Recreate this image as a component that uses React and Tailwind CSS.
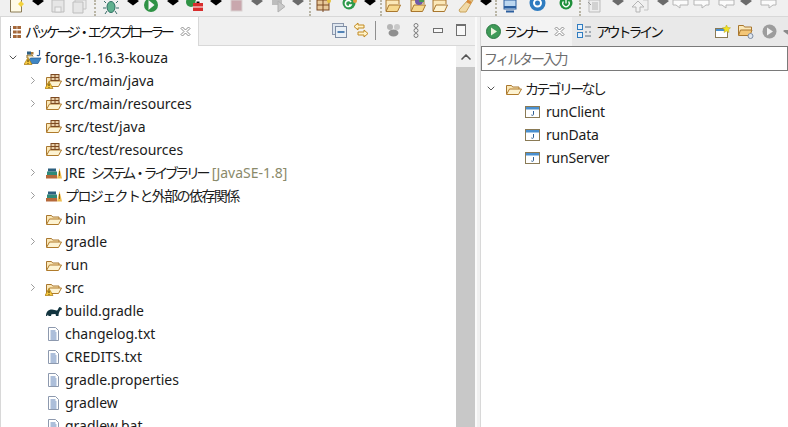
import { ChevronDown, ChevronRight, ChevronUp } from "lucide-react"

const uiFont = { fontFamily: '"Noto Sans", "Noto Sans CJK JP", sans-serif' }

// ---- toolbar bits ----
function Drop({ color = "#000", className = "" }) {
  return (
    <svg width="12" height="16" viewBox="0 0 12 16" className={"shrink-0 " + className}>
      <polygon points="0,1 3,-1 9,-1 12,1 6,5.5" fill={color} />
    </svg>
  )
}

function Dots({ className = "" }) {
  return <div className={"h-[16px] w-[2px] shrink-0 border-l-2 border-dotted border-[#b9b5a5] " + className} />
}

function Tool({ w = 16, className = "", children }) {
  return (
    <svg width={w} height="16" viewBox={`0 0 ${w} 16`} className={"shrink-0 " + className}>
      {children}
    </svg>
  )
}

// ---- tree icons ----
function FolderIcon({ pkg, warn }) {
  return (
    <svg width="18" height="16" viewBox="0 0 18 16">
      <path d="M1.500 13V4.500h5l1.200 1.500H14v2" fill="#fbe8b8" stroke="#a9772f" />
      <path d="M1.500 13.500 4.500 8h12l-3 5.500z" fill="#fdf3d2" stroke="#b07b2b" />
      {pkg && (
        <g>
          <rect x="6" y="1.500" width="8" height="6" fill="#e9cfa8" stroke="#7d4a22" />
          <path d="M10 1.500v6M6 4.500h8" stroke="#7d4a22" />
        </g>
      )}
      {warn && <Warn />}
    </svg>
  )
}

function Warn() {
  return (
    <g>
      <polygon points="4,8.500 8,15.500 0,15.500" fill="#f7c93e" stroke="#a87a12" strokeWidth="0.700" />
      <path d="M4 10.500v2.600M4 14v.8" stroke="#3a2a05" strokeWidth="1" />
    </g>
  )
}

function LibraryIcon() {
  return (
    <svg width="18" height="16" viewBox="0 0 18 16">
      <rect x="1" y="10" width="11" height="3.500" fill="#b5683a" />
      <rect x="2" y="6.500" width="10" height="3.500" fill="#2f8a78" />
      <rect x="3" y="3.500" width="8" height="3" fill="#2c5f7f" />
      <path d="M14.500 3l2.500 10.500h-5z" fill="#eebc4c" />
      <path d="M14.500 6v5" stroke="#8a6516" />
    </svg>
  )
}

function GradleIcon() {
  return (
    <svg width="18" height="16" viewBox="0 0 18 16">
      <path d="M1 13c0-4 2-6.500 6-6.500 2 0 3 1 5 1 1 0 1-2.500 2.500-3.500 1.200 0 2.500 1 2.500 2 0 1-1.500.6-2 1.500-.8 2-1.500 3-1.500 5.500h-2.500l-.5-2-4 .2-.5 1.800H3.500l-.5-1.500L2 13z" fill="#12343f" />
    </svg>
  )
}

function DocIcon() {
  return (
    <svg width="18" height="16" viewBox="0 0 18 16">
      <path d="M3.500 1.500h7l3 3v10h-10z" fill="#fff" stroke="#8d99ae" />
      <path d="M5.500 5h5M5.500 7h6M5.500 9h6M5.500 11h6M5.500 13h6" stroke="#5b7fb5" />
    </svg>
  )
}

function RootIcon() {
  return (
    <svg width="18" height="17" viewBox="0 0 18 17">
      <path d="M3 9V6h5l1 1.500" fill="#e8d9a8" stroke="#8a6a2a" />
      <path d="M4 12 6.500 9H17l-3 5.500H5z" fill="#3f86c4" stroke="#23588c" strokeWidth="0.700" />
      <rect x="3" y="2.500" width="4" height="3" fill="#2f5f82" />
      <rect x="7" y="3" width="2.500" height="2.500" fill="#a87a3a" />
      <path d="M15.500 1v4.500c0 1.500-2 1.500-2.500.5" fill="none" stroke="#2c5f9e" strokeWidth="1.200" />
      <Warn />
    </svg>
  )
}

function RunConfigIcon() {
  return (
    <svg width="15" height="14" viewBox="0 0 15 14">
      <rect x="0.500" y="1.500" width="14" height="11" fill="#fff" stroke="#8a7a55" />
      <rect x="1" y="2" width="13" height="2.500" fill="#4a90d0" />
      <path d="M8.500 6v3.500c0 1-1.500 1-2.200.4" fill="none" stroke="#2f5f95" />
    </svg>
  )
}

function CloseX() {
  return (
    <svg width="11" height="11" viewBox="0 0 11 11" className="block">
      <path d="M1 2.500 2.500 1 5.500 4 8.500 1 10 2.500 7 5.500 10 8.500 8.500 10 5.500 7 2.500 10 1 8.500 4 5.500z" fill="#fff" stroke="#8c8c8c" />
    </svg>
  )
}

function Row({ root, expand, icon, tracking, children }) {
  return (
    <div className={"flex h-[23px] shrink-0 items-center whitespace-nowrap " + (root ? "pl-[6px]" : "pl-[26px]")}>
      <span className="flex w-[12px] justify-center">
        {expand === "open" && <ChevronDown size={13} strokeWidth={2} color="#555" />}
        {expand === "closed" && <ChevronRight size={13} strokeWidth={2} color="#9a9a9a" />}
      </span>
      <span className={root ? "ml-[5px] w-[21px]" : "ml-[6px] w-[20px]"}>{icon}</span>
      <span className={"text-[14px] text-[#1b1b1b] " + (tracking || "")}>{children}</span>
    </div>
  )
}

export default function App() {
  return (
    <div className="flex h-[427px] w-[788px] flex-col overflow-hidden bg-[#f0f0f0]" style={uiFont}>
      {/* top toolbar, cut off at the top of the capture */}
      <div className="flex h-[16px] shrink-0 items-start overflow-hidden">
        <Tool w={16} className="ml-[9px]">
          <path d="M1.500-3h11v15h-11z" fill="#fffbe6" stroke="#8a7a55" />
          <path d="M9 4l3-3 3 3-3 3z" fill="#f3d23c" />
        </Tool>
        <Drop className="ml-[7px]" />
        <Tool w={14} className="ml-[7px]">
          <path d="M1 0h12v12H1z" fill="#e6e6e6" stroke="#bdbdbd" />
          <rect x="4" y="7" width="6" height="5" fill="#f2f2f2" stroke="#c4c4c4" />
        </Tool>
        <Tool w={16} className="ml-[7px]">
          <path d="M3 0h11v9H3z" fill="#ececec" stroke="#c4c4c4" />
          <path d="M1 2h10v11H1z" fill="#e6e6e6" stroke="#bdbdbd" />
        </Tool>
        <Dots className="ml-[6px]" />
        <Tool w={16} className="ml-[7px]">
          <ellipse cx="8" cy="7" rx="4" ry="5.500" fill="#5fb08e" stroke="#2e6f63" />
          <path d="M3 3 1 1M13 3l2-2M3 8H0M13 8h3M4 11l-2 3M12 11l2 3" stroke="#3b6d6a" />
        </Tool>
        <Drop className="ml-[8px]" />
        <Tool w={16} className="ml-[5px]">
          <circle cx="7" cy="5" r="7" fill="#2f9245" />
          <path d="M4.500 0v10L10.500 5z" fill="#f5f5f5" />
        </Tool>
        <Drop className="ml-[7px]" />
        <Tool w={18} className="ml-[7px]">
          <circle cx="5" cy="2" r="5" fill="#2f9245" />
          <rect x="7" y="3" width="10" height="8" fill="#d82c2c" />
          <path d="M7 7h10M10 3V1h4v2" stroke="#fff" />
        </Tool>
        <Drop className="ml-[6px]" />
        <Tool w={14} className="ml-[8px]">
          <rect x="1" y="0" width="11" height="11" fill="#c9a7ad" stroke="#d9d2d2" />
        </Tool>
        <Drop color="#6b6b6b" className="ml-[7px]" />
        <Tool w={18} className="ml-[9px]">
          <path d="M0 0h10v5H0z" fill="#bdbdbd" />
          <path d="M6 1v11l7-5.500z" fill="#c9c9c9" stroke="#b0b0b0" />
        </Tool>
        <Drop color="#6b6b6b" className="ml-[2px]" />
        <Dots className="ml-[5px]" />
        <Tool w={16} className="ml-[5px]">
          <rect x="1" y="0" width="12" height="10" fill="#e8c89a" stroke="#7d4a22" />
          <path d="M7 0v12M1 5h12" stroke="#7d4a22" />
          <circle cx="13" cy="1" r="2" fill="#e6c341" />
        </Tool>
        <Tool w={16} className="ml-[10px]">
          <circle cx="7" cy="3" r="6.500" fill="#2e9a4b" />
          <path d="M9 2a3 3 0 1 0 0 3H7" fill="none" stroke="#fff" strokeWidth="1.600" />
          <circle cx="13" cy="1" r="2" fill="#e09a3a" />
        </Tool>
        <Drop className="ml-[6px]" />
        <Dots className="ml-[4px]" />
        <Tool w={16} className="ml-[3px]">
          <path d="M1 11V0h13v4" fill="#fbe8b8" stroke="#a9772f" />
          <path d="M1 11.500 4 5h11.500l-3 6.500z" fill="#f7d98e" stroke="#a9772f" />
        </Tool>
        <Tool w={17} className="ml-[9px]">
          <path d="M1 11V0h13v4" fill="#fbe8b8" stroke="#a9772f" />
          <path d="M1 11.500 4 5h11.500l-3 6.500z" fill="#f7d98e" stroke="#a9772f" />
          <circle cx="9" cy="1" r="4" fill="#6f5ba8" />
          <path d="M9 1h5" stroke="#4a9a55" strokeWidth="2" />
        </Tool>
        <Tool w={16} className="ml-[5px]">
          <path d="M1 11V0h13v4" fill="#fbe8b8" stroke="#a9772f" />
          <path d="M1 11.500 4 5h11.500l-3 6.500z" fill="#fdf3d2" stroke="#a9772f" />
        </Tool>
        <Tool w={18} className="ml-[8px]">
          <path d="M3 10 12 0h5l-7 12H4z" fill="#f0d9a6" stroke="#c9a25a" />
          <path d="M11 1l4 2" stroke="#d98a3a" strokeWidth="3" />
        </Tool>
        <Drop className="ml-[6px]" />
        <Dots className="ml-[3px]" />
        <Tool w={14} className="ml-[6px]">
          <rect x="1" y="0" width="12" height="9" fill="#bcd7f0" stroke="#2c5f9e" />
          <path d="M1 7h12" stroke="#2c5f9e" strokeWidth="2" />
          <path d="M3 11.500h8" stroke="#2c5f9e" strokeWidth="2" />
        </Tool>
        <Tool w={18} className="ml-[12px]">
          <circle cx="8.500" cy="3" r="8" fill="#2f7cc0" />
          <circle cx="8.500" cy="3" r="3.500" fill="none" stroke="#fff" strokeWidth="2" />
        </Tool>
        <Tool w={15} className="ml-[12px]">
          <circle cx="7" cy="3" r="6.500" fill="#1f8f3a" />
          <path d="M7 -0.500v4M4.500 1.500a3.200 3.200 0 1 0 5 0" fill="none" stroke="#fff" strokeWidth="1.300" />
        </Tool>
        <Dots className="ml-[5px]" />
        <Tool w={17} className="ml-[6px]">
          <path d="M2 0h11v12H2z" fill="#ededed" stroke="#bbb" />
          <path d="M5 3h6M5 5h6M5 7h6M5 9h6" stroke="#b5b5b5" />
          <path d="M1 2l3 3" stroke="#999" />
        </Tool>
        <Drop color="#6b6b6b" className="ml-[8px]" />
        <Tool w={19} className="ml-[6px]">
          <path d="M6 12V7H2l6-6 6 6h-4v5z" fill="#f2f2f2" stroke="#b5b5b5" />
          <path d="M13 0h5v10h-4" fill="none" stroke="#c4c4c4" />
        </Tool>
        <Drop color="#6b6b6b" className="ml-[8px]" />
        <Tool w={17} className="ml-[3px]">
          <path d="M1 0h15v5H8v3L4 5H1z" fill="#fbfbfb" stroke="#b5b5b5" />
        </Tool>
        <Tool w={17} className="ml-[4px]">
          <path d="M1 0h15v5h-3L9 8V5H1z" fill="#fbfbfb" stroke="#b5b5b5" />
        </Tool>
        <Tool w={17} className="ml-[8px]">
          <path d="M1 0h15v5H8v3L4 5H1z" fill="#fbfbfb" stroke="#b5b5b5" />
        </Tool>
        <Drop color="#6b6b6b" className="ml-[5px]" />
        <Tool w={17} className="ml-[8px]">
          <path d="M1 0h15v5h-3L9 8V5H1z" fill="#fbfbfb" stroke="#b5b5b5" />
        </Tool>
      </div>

      <div className="flex min-h-0 flex-1 border-t border-[#d8d8d8]">
        {/* package explorer */}
        <div className="flex w-[475px] shrink-0 flex-col border-l border-[#d8d8d8] bg-white">
          <div className="flex h-[29px] shrink-0 items-center">
            <div className="flex h-[29px] w-[198px] shrink-0 items-center border-r border-[#d8d8d8] bg-white pl-[8px]">
              <svg width="13" height="14" viewBox="0 0 13 14" className="shrink-0">
                <path d="M1.500 1v12" stroke="#555" />
                <rect x="4" y="1" width="8" height="3" fill="#a5683a" />
                <rect x="4" y="5.500" width="8" height="3" fill="#a5683a" />
                <rect x="4" y="10" width="8" height="3" fill="#a5683a" />
                <path d="M1.500 2.500H4M1.500 7H4M1.500 11.500H4M8 1v12" stroke="#fff" strokeWidth="0.600" />
              </svg>
              <span className="ml-[3px] w-[150px] shrink-0 whitespace-nowrap text-[14px] tracking-[-3.5px] text-[#111]">パッケージ・エクスプローラー</span>
              <span className="ml-auto mr-[7px]"><CloseX /></span>
            </div>
            <div className="flex h-[29px] flex-1 items-center border-b border-[#d8d8d8] bg-[#f0f0f0] pb-[2px]">
              <svg width="15" height="15" viewBox="0 0 15 15" className="ml-[133px]">
                <rect x="0.500" y="0.500" width="11" height="11" fill="#dfe6ee" stroke="#8d99ae" />
                <rect x="3.500" y="3.500" width="11" height="11" fill="#e9eff5" stroke="#7d8ca3" />
                <path d="M5.500 9h7" stroke="#1f5fa0" strokeWidth="1.500" />
              </svg>
              <svg width="16" height="16" viewBox="0 0 16 16" className="ml-[6px]">
                <path d="M1 4.500 5 1v2h6v3H5v2z" fill="#fff3c9" stroke="#c28a22" />
                <path d="M15 11.500 11 8v2H5v3h6v2z" fill="#fff3c9" stroke="#c28a22" />
              </svg>
              <div className="ml-[6px] h-[19px] w-px bg-[#8f8f8f]" />
              <svg width="15" height="14" viewBox="0 0 15 14" className="ml-[10px]">
                <circle cx="4" cy="4" r="3" fill="#b5b5b5" />
                <circle cx="11" cy="4" r="3" fill="#c9c9c9" />
                <ellipse cx="7.500" cy="10" rx="5" ry="3.500" fill="#8f8f8f" />
              </svg>
              <svg width="6" height="15" viewBox="0 0 6 15" className="ml-[12px]">
                <circle cx="3" cy="2.500" r="2" fill="#f5f5f5" stroke="#7b7b7b" />
                <circle cx="3" cy="7.500" r="2" fill="#f5f5f5" stroke="#7b7b7b" />
                <circle cx="3" cy="12.500" r="2" fill="#f5f5f5" stroke="#7b7b7b" />
              </svg>
              <div className="ml-[14px] h-[5px] w-[10px] border border-[#6f6f6f] bg-[#f8f8f8]" />
              <div className="ml-[13px] h-[12px] w-[10px] border border-t-2 border-[#6f6f6f] bg-[#f8f8f8]" />
            </div>
          </div>
          <div className="flex min-h-0 flex-1">
            <div className="min-w-0 flex-1 overflow-hidden">
              <Row root expand="open" icon={<RootIcon />}>forge-1.16.3-kouza</Row>
              <Row expand="closed" icon={<FolderIcon pkg warn />}>src/main/java</Row>
              <Row expand="closed" icon={<FolderIcon pkg />}>src/main/resources</Row>
              <Row icon={<FolderIcon pkg />}>src/test/java</Row>
              <Row icon={<FolderIcon pkg />}>src/test/resources</Row>
              <Row expand="closed" icon={<LibraryIcon />}>
                JRE <span className="ml-[2px] tracking-[-3.4px]">システム・ライブラリー</span> <span className="ml-[1px] text-[#8a8a6a]">[JavaSE-1.8]</span>
              </Row>
              <Row expand="closed" icon={<LibraryIcon />} tracking="tracking-[-1.6px]">プロジェクトと外部の依存関係</Row>
              <Row icon={<FolderIcon />}>bin</Row>
              <Row expand="closed" icon={<FolderIcon />}>gradle</Row>
              <Row icon={<FolderIcon />}>run</Row>
              <Row expand="closed" icon={<FolderIcon warn />}>src</Row>
              <Row icon={<GradleIcon />}>build.gradle</Row>
              <Row icon={<DocIcon />}>changelog.txt</Row>
              <Row icon={<DocIcon />}>CREDITS.txt</Row>
              <Row icon={<DocIcon />}>gradle.properties</Row>
              <Row icon={<DocIcon />}>gradlew</Row>
              <Row icon={<DocIcon />}>gradlew.bat</Row>
            </div>
            <div className="flex w-[19px] shrink-0 flex-col bg-[#c8c8c8]">
              <div className="flex h-[21px] items-center justify-center bg-[#f0f0f0]">
                <ChevronUp size={16} strokeWidth={2.5} color="#555" />
              </div>
            </div>
          </div>
        </div>

        {/* sash */}
        <div className="w-[6px] shrink-0 border-r border-l-2 border-r-[#d8d8d8] border-l-[#fafafa] bg-[#f0f0f0]" />

        {/* runner view */}
        <div className="flex min-w-0 flex-1 flex-col bg-white">
          <div className="flex h-[29px] shrink-0 items-center overflow-hidden bg-[#e9e9e9]">
            <div className="flex h-[29px] w-[91px] shrink-0 items-center bg-[#f3f3f3] pl-[5px]">
              <svg width="15" height="15" viewBox="0 0 15 15" className="shrink-0">
                <circle cx="7.500" cy="7.500" r="7" fill="#3f9a58" stroke="#2d7a44" />
                <path d="M5 3.500v8l6-4z" fill="#eef5e0" />
              </svg>
              <span className="ml-[3px] w-[42px] shrink-0 whitespace-nowrap text-[14px] tracking-[-3.6px] text-[#111]">ランナー</span>
              <span className="ml-auto mr-[7px]"><CloseX /></span>
            </div>
            <svg width="15" height="15" viewBox="0 0 15 15" className="ml-[5px] shrink-0">
              <rect x="0.500" y="0.500" width="5" height="5" fill="#e6f0fa" stroke="#2f7cc0" />
              <rect x="0.500" y="8.500" width="5" height="5" fill="#e6f0fa" stroke="#2f7cc0" />
              <path d="M8 3h6M8 8h2M12 8h2M8 12h6" stroke="#5c6f80" />
            </svg>
            <span className="ml-[4px] w-[65px] shrink-0 whitespace-nowrap text-[14px] tracking-[-3.2px] text-[#111]">アウトライン</span>
            <svg width="16" height="14" viewBox="0 0 16 14" className="ml-[54px] shrink-0">
              <rect x="0.500" y="3.500" width="12" height="9" fill="#fff" stroke="#8a7a55" />
              <rect x="1" y="4" width="11" height="2" fill="#4a90d0" />
              <path d="M11.500 0l1.200 2.500 2.800.3-2 1.900.5 2.800-2.500-1.400-2.500 1.400.5-2.800-2-1.900 2.800-.3z" fill="#f2e21f" stroke="#b8a818" strokeWidth="0.500" />
            </svg>
            <svg width="16" height="15" viewBox="0 0 16 15" className="ml-[7px] shrink-0">
              <path d="M0.500 11V1.500h5l1 1.500h7v3" fill="#fbe8b8" stroke="#a9772f" />
              <path d="M0.500 11.500 2.500 6H14l-2 5.500z" fill="#f3c677" stroke="#a9772f" />
              <circle cx="12.500" cy="12" r="2.500" fill="#dfe6ee" stroke="#7d8ca3" />
            </svg>
            <svg width="15" height="15" viewBox="0 0 15 15" className="ml-[8px] shrink-0">
              <circle cx="7.500" cy="7.500" r="7" fill="#9d9d9d" />
              <path d="M5 3.500v8l6-4z" fill="#f1f1f1" />
            </svg>
            <Drop color="#8a8a8a" className="ml-[6px] mt-[12px]" />
          </div>
          <div className="flex h-[25px] shrink-0 items-center border border-[#7a7a7a] bg-white pl-[2px] text-[14px] tracking-[-2.2px] text-[#6d6d6d]">
            フィルター入力
          </div>
          <div className="pt-[6px]">
            <div className="flex h-[23px] items-center pl-[4px]">
              <span className="flex w-[12px] justify-center"><ChevronDown size={13} strokeWidth={2} color="#555" /></span>
              <span className="ml-[8px] w-[20px]"><FolderIcon /></span>
              <span className="text-[14px] tracking-[-2.7px] text-[#1b1b1b]">カテゴリーなし</span>
            </div>
            {["runClient", "runData", "runServer"].map((name) => (
              <div key={name} className="flex h-[23px] items-center pl-[44px]">
                <span className="w-[21px]"><RunConfigIcon /></span>
                <span className="text-[14px] tracking-[-0.2px] text-[#1b1b1b]">{name}</span>
              </div>
            ))}
          </div>
        </div>
      </div>
    </div>
  )
}
